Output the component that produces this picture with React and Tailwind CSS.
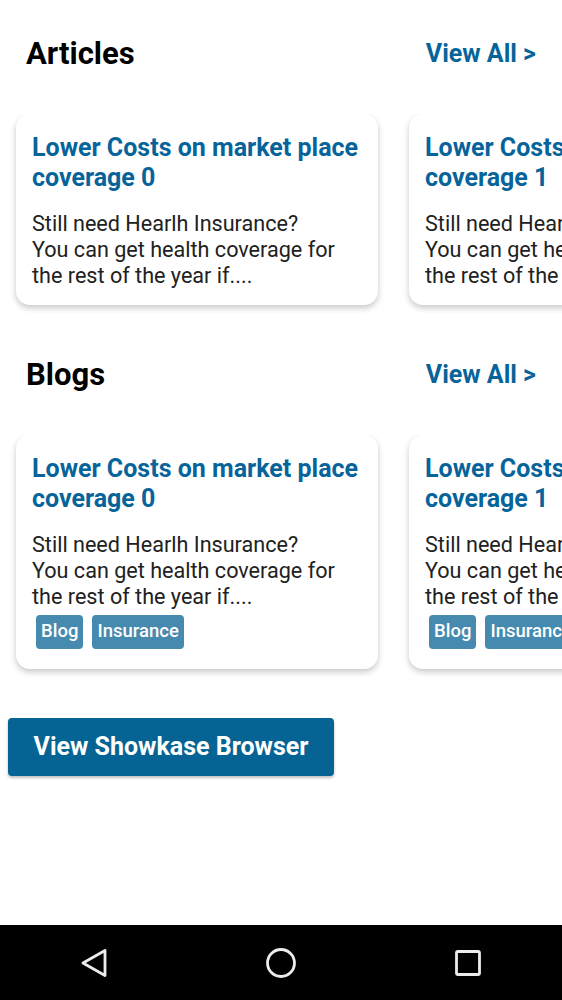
import React from "react";

const font = { fontFamily: "Roboto, 'Noto Sans', sans-serif" };

function Card({ n, tags }) {
  return (
    <div className="w-[362px] shrink-0 rounded-[14px] bg-white px-[16px] pt-[19px] shadow-[0_3px_6px_rgba(0,0,0,0.22)]" style={{ paddingBottom: tags ? 20 : 16 }}>
      <div className="whitespace-nowrap text-[25px] font-bold leading-[30px] text-[#07649a]">
        Lower Costs on market place
        <br />
        coverage {n}
      </div>
      <div className="mt-[18px] whitespace-nowrap text-[21.6px] leading-[26px] text-[#212121]">
        Still need Hearlh Insurance?
        <br />
        You can get health coverage for
        <br />
        the rest of the year if....
      </div>
      {tags && (
        <div className="mt-[5px] flex gap-[9px] pl-[4px]">
          {tags.map((t) => (
            <span key={t} className="flex h-[34px] items-center rounded-[4px] bg-[#468aaf] px-[5px] text-[18.5px] font-medium text-white">
              {t}
            </span>
          ))}
        </div>
      )}
    </div>
  );
}

function Section({ title, tags }) {
  return (
    <div>
      <div className="flex h-[46px] items-center justify-between pl-[26px] pr-[26px]">
        <div className="text-[31px] font-bold text-black">{title}</div>
        <div className="text-[25px] font-bold text-[#07649a]">View All &gt;</div>
      </div>
      <div className="mt-[37px] flex gap-[31px] overflow-hidden pb-[8px] pl-[16px]">
        <Card n={0} tags={tags} />
        <Card n={1} tags={tags} />
      </div>
    </div>
  );
}

export default function App() {
  return (
    <div className="flex min-h-[1000px] w-[562px] flex-col overflow-hidden bg-white" style={font}>
      <div className="pt-[31px]">
        <Section title="Articles" />
        <div className="mt-[39px]">
          <Section title="Blogs" tags={["Blog", "Insurance"]} />
        </div>
        <div className="mt-[41px] pl-[8px]">
          <button className="h-[58px] w-[326px] rounded-[4px] bg-[#066494] text-[25px] font-bold text-white shadow-[0_2px_3px_rgba(0,0,0,0.25)]">
            View Showkase Browser
          </button>
        </div>
      </div>
      <div className="mt-auto flex h-[75px] items-center justify-center gap-[156px] bg-black">
        <svg width="30" height="30" viewBox="0 0 30 30">
          <path d="M26 2.5 L4 15 L26 27.5 Z" fill="none" stroke="#ececec" strokeWidth="2.8" strokeLinejoin="round" />
        </svg>
        <svg width="32" height="32" viewBox="0 0 32 32">
          <circle cx="16" cy="16" r="13.5" fill="none" stroke="#ececec" strokeWidth="2.8" />
        </svg>
        <svg width="30" height="30" viewBox="0 0 30 30">
          <rect x="3.5" y="3.5" width="23" height="23" rx="1.5" fill="none" stroke="#ececec" strokeWidth="2.8" />
        </svg>
      </div>
    </div>
  );
}
